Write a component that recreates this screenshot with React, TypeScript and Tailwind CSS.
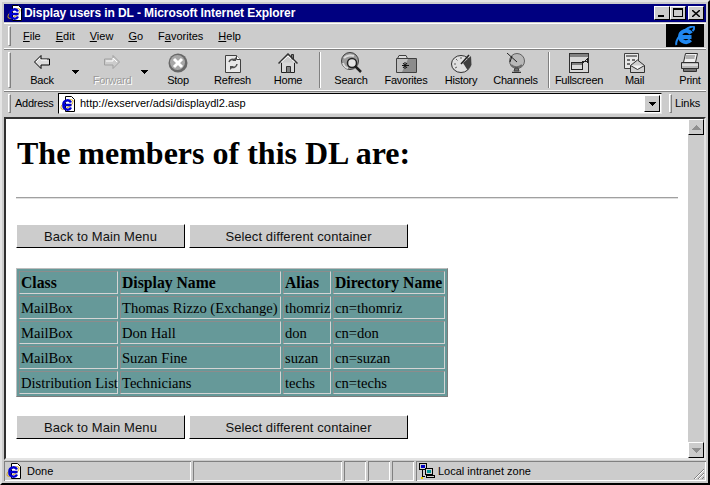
const sans = 'font-["Liberation_Sans",Arial,sans-serif]';

const raised = 'border border-t-white border-l-white border-r-black border-b-black';
const etched = 'shadow-[inset_1px_1px_0_#808080,inset_-1px_-1px_0_#ffffff]';

function Grip() {
  return <div className="w-[3px] h-full border border-t-white border-l-white border-r-[#808080] border-b-[#808080] shrink-0" />;
}

function PageE({ className = '' }: { className?: string }) {
  return (
    <svg width="16" height="16" viewBox="0 0 16 16" className={className}>
      <path d="M5.500.5h6l3 3v12h-9z" fill="#fff" stroke="#000" />
      <ellipse cx="7" cy="8.500" rx="7" ry="3" fill="none" stroke="#d8a818" transform="rotate(-35 7 8.500)" />
      <path d="M11.500 9H3.500a4 4 0 0 1 7.500-2.500M3.500 9a4 4 0 0 0 7.500 2.500" fill="none" stroke="#0000d0" strokeWidth="2.400" />
    </svg>
  );
}

function BackIcon() {
  return (
    <svg width="16" height="14" viewBox="0 0 16 14">
      <path d="M.5 7 7 .5v3.500h8.500v6H7v3.500z" fill="#dcdcdc" stroke="#000" />
      <path d="M7 5h6M2 7l4-4" stroke="#fff" fill="none" />
    </svg>
  );
}

function ForwardIcon() {
  return (
    <svg width="16" height="14" viewBox="0 0 16 14">
      <path d="M15.500 7 9 .5v3.500H.5v6H9v3.500z" fill="#cccccc" stroke="#a0a0a0" />
      <path d="M2 6h7V3l4 4" stroke="#fff" fill="none" />
    </svg>
  );
}

function StopIcon() {
  return (
    <svg width="20" height="20" viewBox="0 0 20 20">
      <circle cx="10" cy="10" r="9.500" fill="#686868" />
      <circle cx="9.500" cy="9.500" r="7.500" fill="#a8a8a8" />
      <path d="M6 6l8 8M14 6l-8 8" stroke="#fff" strokeWidth="3" />
    </svg>
  );
}

function RefreshIcon() {
  return (
    <svg width="20" height="20" viewBox="0 0 20 20">
      <path d="M2.500 2.500h11l4 4v13h-15z" fill="#e8e8e8" stroke="#404040" />
      <path d="M13.500 2.500v4h4" fill="#fff" stroke="#404040" />
      <path d="M6 9a4 4 0 0 1 6-2M14 11a4 4 0 0 1-6 3" fill="none" stroke="#505050" strokeWidth="1.500" />
      <path d="M13 4v4H9zM7 17v-4h4z" fill="#505050" />
    </svg>
  );
}

function HomeIcon() {
  return (
    <svg width="20" height="20" viewBox="0 0 20 20">
      <path d="M13.500 1.500h2v5h-2z" fill="#808080" stroke="#303030" />
      <path d="M3.500 9.500v10h13v-10" fill="#d8d8d8" stroke="#202020" />
      <path d="M.5 10.500 10 1l9.500 9.500" fill="none" stroke="#303030" strokeWidth="1.500" />
      <path d="M3 9.500 10 3l7 6.500" fill="none" stroke="#fff" />
      <path d="M8.500 13.500h4v6h-4z" fill="#808080" stroke="#303030" />
    </svg>
  );
}

function SearchIcon() {
  return (
    <svg width="21" height="21" viewBox="0 0 21 21">
      <circle cx="9" cy="9" r="8.500" fill="#9a9a9a" stroke="#404040" />
      <path d="M3 6c3-3 8-3 10-2M2 11c1 3 3 5 5 5" fill="none" stroke="#dcdcdc" strokeWidth="2" />
      <circle cx="11" cy="11" r="4.500" fill="#e4e4e4" stroke="#202020" strokeWidth="1.500" />
      <path d="m14 14 6 6" stroke="#202020" strokeWidth="2.500" />
    </svg>
  );
}

function FavoritesIcon() {
  return (
    <svg width="21" height="18" viewBox="0 0 21 18">
      <path d="M1.500 3.500 3 .5h7l1.500 3" fill="#dcdcdc" stroke="#404040" />
      <path d="M.5 3.500h20v14H.5z" fill="#c0c0c0" stroke="#404040" />
      <path d="M12 4h8v13H6z" fill="#8c8c8c" />
      <path d="M9 7v7M6 10.500h7M7 8l4 5M11 8l-4 5" stroke="#111" />
    </svg>
  );
}

function HistoryIcon() {
  return (
    <svg width="21" height="20" viewBox="0 0 21 20">
      <ellipse cx="10" cy="11" rx="9.500" ry="8.500" fill="#e0e0e0" stroke="#303030" />
      <path d="M12 10 20 3l.5 9-4 5z" fill="#404040" />
      <path d="M10 11 18 2" stroke="#202020" strokeWidth="1.500" />
      <path d="M3 11h2M5 6l1.500 1.500M10 4v2M4 15l2-1" stroke="#606060" />
    </svg>
  );
}

function ChannelsIcon() {
  return (
    <svg width="20" height="20" viewBox="0 0 20 20">
      <circle cx="11" cy="8" r="7.500" fill="#b8b8b8" stroke="#606060" />
      <path d="M5 12c3 3 8 3 11 0" fill="none" stroke="#6c6c6c" strokeWidth="2" />
      <path d="M1 0l10 9M6 3 4 9" stroke="#202020" />
      <path d="M9 15h3l1 3H8z" fill="#707070" stroke="#404040" />
      <path d="M6 19.500h9" stroke="#303030" strokeWidth="1.500" />
    </svg>
  );
}

function FullscreenIcon() {
  return (
    <svg width="20" height="20" viewBox="0 0 20 20" shapeRendering="crispEdges">
      <path d="M.5.5h19v19H.5z" fill="#d8d8d8" stroke="#303030" />
      <path d="M1 1h18v3H1z" fill="#808080" />
      <path d="M2.500 9.500h11v7h-11z" fill="#d8d8d8" stroke="#202020" />
      <path d="M3 10h10v2H3z" fill="#808080" />
      <path d="M13 8h5M18 5v5M14 10l4-4" stroke="#202020" fill="none" />
    </svg>
  );
}

function MailIcon() {
  return (
    <svg width="21" height="20" viewBox="0 0 21 20">
      <path d="M.5.5h14v15H.5z" fill="#e8e8e8" stroke="#404040" />
      <path d="M2 2h11v2H2z" fill="#808080" />
      <path d="M3 6h3v2H3zM8 6h3v2H8zM3 10h3v2H3z" fill="#707070" />
      <path d="M6.500 12.500 13.500 7l7 5.500v7h-14z" fill="#d0d0d0" stroke="#303030" />
      <path d="m6.500 12.500 7 4 7-4" fill="#f4f4f4" stroke="#303030" />
    </svg>
  );
}

function PrintIcon() {
  return (
    <svg width="20" height="20" viewBox="0 0 20 20">
      <path d="M5.500.5h12l-2 9H3.500z" fill="#f0f0f0" stroke="#303030" />
      <path d="M6 3h9M5.500 5h9" stroke="#707070" />
      <path d="M1.500 9.500h17v6h-17z" fill="#b8b8b8" stroke="#303030" />
      <path d="M2 12h16" stroke="#fff" />
      <path d="M3.500 15.500h13v3h-13z" fill="#707070" stroke="#303030" />
    </svg>
  );
}

function BigE() {
  return (
    <svg width="20" height="20" viewBox="0 0 20 20">
      <path d="M16.500 11H5a6 6 0 0 1 11-3.500M5 11a6 6 0 0 0 10.500 3" fill="none" stroke="#2088f0" strokeWidth="4" />
      <path d="M1.500 19C0 16 4 9 10 4c4-3 8-4 9-3 .5 1-.5 3-1.500 4" fill="none" stroke="#2088f0" strokeWidth="2" />
    </svg>
  );
}

function NetIcon() {
  return (
    <svg width="16" height="16" viewBox="0 0 16 16" shapeRendering="crispEdges">
      <path d="M.5.5h7v6h-7z" fill="#d0d0d0" stroke="#000" />
      <path d="M2 2h4v3H2z" fill="#0000c0" />
      <path d="M6.500 5.500h7v6h-7z" fill="#d0d0d0" stroke="#000" />
      <path d="M8 7h4v3H8z" fill="#009898" />
      <path d="M3 7v6M3 13h3" stroke="#000" />
      <path d="M7.500 12.500h8v2h-8z" fill="#d0d0d0" stroke="#000" />
      <path d="M2 14h2v2H2z" fill="#e8d000" />
    </svg>
  );
}

function Arrow() {
  return (
    <svg width="7" height="4" viewBox="0 0 7 4" shapeRendering="crispEdges" className="shrink-0">
      <path d="M0 0h7v1H0zM1 1h5v1H1zM2 2h3v1H2zM3 3h1v1H3z" fill="#000" />
    </svg>
  );
}

function Tool({ label, width, disabled, children }: { label: string; width: string; disabled?: boolean; children: React.ReactNode }) {
  return (
    <div className={`${width} shrink-0 h-full flex flex-col items-center`}>
      <div className="h-[23px] flex items-end justify-center">{children}</div>
      <span className={`mt-auto pb-[3px] text-[11px] leading-[14px] tracking-[-0.25px] whitespace-nowrap ${disabled ? 'text-[#9a9a9a] [text-shadow:1px_1px_0_#fff]' : 'text-black'}`}>
        {label}
      </span>
    </div>
  );
}

function ToolSep() {
  return <div className="w-[2px] h-[36px] border-l border-[#808080] bg-white shrink-0" />;
}

function PageButton({ label, width }: { label: string; width: string }) {
  return (
    <button className={`${width} h-[24px] bg-[#cccccc] ${raised} text-[13px] leading-none tracking-[0.1px] text-[#111] ${sans}`}>
      {label}
    </button>
  );
}

function ButtonRow() {
  return (
    <div className="flex gap-[4px]">
      <PageButton label="Back to Main Menu" width="w-[169px]" />
      <PageButton label="Select different container" width="w-[219px]" />
    </div>
  );
}

const rows = [
  ['MailBox', 'Thomas Rizzo (Exchange)', 'thomriz', 'cn=thomriz'],
  ['MailBox', 'Don Hall', 'don', 'cn=don'],
  ['MailBox', 'Suzan Fine', 'suzan', 'cn=suzan'],
  ['Distribution List', 'Technicians', 'techs', 'cn=techs'],
];
const headers = ['Class', 'Display Name', 'Alias', 'Directory Name'];
const cellBorder = 'border border-t-[#8c8c8c] border-l-[#8c8c8c] border-r-[#d4d4d4] border-b-[#d4d4d4]';

function ScrollButton({ flip = false }: { flip?: boolean }) {
  return (
    <div className={`w-[16px] h-[16px] bg-[#cccccc] ${raised} flex items-center justify-center shrink-0`}>
      <svg width="9" height="5" viewBox="0 0 9 5" shapeRendering="crispEdges" className={flip ? '' : 'rotate-180'}>
        <path d="M0 0h9v1H0zM1 1h7v1H1zM2 2h5v1H2zM3 3h3v1H3zM4 4h1v1H4z" fill="#909090" />
      </svg>
    </div>
  );
}

export default function App() {
  return (
    <div className={`w-[710px] h-[485px] overflow-hidden bg-[#cccccc] flex flex-col border-[2px] border-t-[#e4e4e4] border-l-[#e4e4e4] border-r-black border-b-black p-[2px] ${sans}`}>
      {/* Title bar */}
      <div className="h-[18px] bg-[#000080] flex items-center pl-[3px] pr-[2px] shrink-0">
        <PageE />
        <span className="ml-[1px] text-white font-bold text-[12px] leading-none tracking-[-0.08px]">
          Display users in DL - Microsoft Internet Explorer
        </span>
        <div className="ml-auto flex">
          {['min', 'max'].map((k) => (
            <div key={k} className={`w-[16px] h-[14px] bg-[#cccccc] ${raised} relative`}>
              {k === 'min' ? (
                <div className="absolute left-[3px] bottom-[2px] w-[6px] h-[2px] bg-black" />
              ) : (
                <div className="absolute left-[2px] top-[1px] w-[10px] h-[9px] border border-t-2 border-black" />
              )}
            </div>
          ))}
          <div className={`ml-[2px] w-[16px] h-[14px] bg-[#cccccc] ${raised} flex items-center justify-center`}>
            <svg width="8" height="7" viewBox="0 0 8 7">
              <path d="M0 0l8 7M8 0 0 7" stroke="#000" strokeWidth="1.500" />
            </svg>
          </div>
        </div>
      </div>

      {/* Menu row */}
      <div className="h-[25px] mt-[2px] pr-[2px] flex shrink-0 border-b border-white shadow-[0_-1px_0_#fff]">
        <div className="flex items-center flex-1 pl-[4px] py-[2px]">
          <Grip />
          <div className="ml-[12px] flex gap-[15px] text-[11px] text-black">
            <span><u>F</u>ile</span>
            <span><u>E</u>dit</span>
            <span><u>V</u>iew</span>
            <span><u>G</u>o</span>
            <span>F<u>a</u>vorites</span>
            <span><u>H</u>elp</span>
          </div>
        </div>
        <div className="w-[38px] h-[23px] bg-black flex items-center justify-center">
          <BigE />
        </div>
      </div>

      {/* Toolbar */}
      <div className="h-[42px] flex items-center shrink-0 pl-[4px] border-t border-[#808080] border-b border-b-white overflow-hidden">
        <div className="h-[36px] flex items-center"><Grip /></div>
        <div className="h-full flex items-center ml-[3px]">
          <Tool label="Back" width="w-[56px]"><div className="mb-[4px]"><BackIcon /></div></Tool>
          <div className="w-[10px] mr-[4px] pt-[3px] flex justify-center shrink-0"><Arrow /></div>
          <Tool label="Forward" width="w-[56px]" disabled><div className="mb-[4px]"><ForwardIcon /></div></Tool>
          <div className="w-[8px] mr-[4px] pt-[3px] flex justify-center shrink-0"><Arrow /></div>
          <Tool label="Stop" width="w-[52px]"><StopIcon /></Tool>
          <Tool label="Refresh" width="w-[57px]"><RefreshIcon /></Tool>
          <Tool label="Home" width="w-[54px]"><HomeIcon /></Tool>
          <div className="w-[4px]" />
          <ToolSep />
          <div className="w-[3px]" />
          <Tool label="Search" width="w-[54px]"><SearchIcon /></Tool>
          <Tool label="Favorites" width="w-[56px]"><FavoritesIcon /></Tool>
          <Tool label="History" width="w-[54px]"><HistoryIcon /></Tool>
          <Tool label="Channels" width="w-[55px]"><ChannelsIcon /></Tool>
          <div className="w-[5px]" />
          <ToolSep />
          <div className="w-[2px]" />
          <Tool label="Fullscreen" width="w-[54px]"><FullscreenIcon /></Tool>
          <Tool label="Mail" width="w-[57px]"><MailIcon /></Tool>
          <Tool label="Print" width="w-[54px]"><PrintIcon /></Tool>
        </div>
      </div>

      {/* Address row */}
      <div className="h-[24px] flex items-center shrink-0 pl-[4px] border-t border-[#808080] py-[2px]">
        <Grip />
        <span className="ml-[4px] w-[43px] shrink-0 text-[11px] tracking-[-0.25px] text-black">Address</span>
        <div className="w-[604px] h-[21px] bg-white border border-t-black border-l-black border-r-[#e4e4e4] border-b-[#e4e4e4] flex items-center pl-[1px] pr-[1px]">
          <PageE />
          <span className="ml-[4px] text-[11px] text-black">http://exserver/adsi/displaydl2.asp</span>
          <div className={`ml-auto w-[16px] h-[17px] bg-[#cccccc] ${raised} flex items-center justify-center`}>
            <Arrow />
          </div>
        </div>
        <div className="ml-[7px] h-full"><Grip /></div>
        <span className="ml-[3px] text-[11px] tracking-[-0.1px] text-black">Links</span>
      </div>

      {/* Page area */}
      <div className="flex-1 min-h-0 mt-[2px] flex border-[2px] border-t-[#303030] border-l-[#303030] border-r-[#e4e4e4] border-b-[#e4e4e4]">
        <div className="flex-1 min-w-0 bg-white pl-[10px] pr-[10px] pt-[16px] overflow-hidden">
          <h1 className={`font-["Liberation_Serif","Times_New_Roman",serif] font-bold text-[32px] leading-[37px] text-black pl-[1px]`}>
            The members of this DL are:
          </h1>
          <hr className="mt-[25px] h-[2px] border-0 bg-[#a0a0a0] border-b border-b-[#e0e0e0]" />
          <div className="mt-[25px]"><ButtonRow /></div>
          <table className={`mt-[20px] w-[431px] table-fixed border-separate border-spacing-[2px] bg-[#669999] border border-t-[#bdbdbd] border-l-[#bdbdbd] border-r-[#7c7c7c] border-b-[#7c7c7c] font-["Liberation_Serif","Times_New_Roman",serif] text-[14.6px] leading-[18px] text-black`}>
            <colgroup>
              <col className="w-[99px]" />
              <col className="w-[161px]" />
              <col className="w-[48px]" />
              <col className="w-[112px]" />
            </colgroup>
            <thead>
              <tr>
                {headers.map((h) => (
                  <th key={h} className={`h-[23px] pl-[1px] pr-0 py-0 text-left font-bold text-[15.7px] whitespace-nowrap ${cellBorder}`}>{h}</th>
                ))}
              </tr>
            </thead>
            <tbody>
              {rows.map((r) => (
                <tr key={r[3]}>
                  {r.map((c) => (
                    <td key={c} className={`h-[23px] pl-[1px] pr-0 py-0 whitespace-nowrap ${cellBorder}`}>{c}</td>
                  ))}
                </tr>
              ))}
            </tbody>
          </table>
          <div className="mt-[18px]"><ButtonRow /></div>
        </div>
        {/* Scrollbar */}
        <div className="w-[16px] flex flex-col justify-between bg-[#cccccc] shrink-0">
          <ScrollButton />
          <ScrollButton flip />
        </div>
      </div>

      {/* Status bar */}
      <div className="h-[20px] mt-[1px] flex gap-[2px] shrink-0 text-[11px] text-black">
        <div className={`w-[187px] flex items-center ${etched}`}>
          <PageE className="ml-[2px]" />
          <span className="ml-[5px]">Done</span>
        </div>
        <div className={`w-[149px] ${etched}`} />
        <div className={`w-[22px] ${etched}`} />
        <div className={`w-[22px] ${etched}`} />
        <div className={`w-[22px] ${etched}`} />
        <div className={`flex-1 flex items-center relative pl-[3px] ${etched}`}>
          <NetIcon />
          <span className="ml-[3px]">Local intranet zone</span>
          <svg width="12" height="12" viewBox="0 0 12 12" className="absolute right-[1px] bottom-[1px]">
            <path d="M11 1 1 11M11 5l-6 6M11 9l-2 2" stroke="#808080" />
            <path d="M11 2 2 11M11 6l-5 5" stroke="#fff" />
          </svg>
        </div>
      </div>
    </div>
  );
}
